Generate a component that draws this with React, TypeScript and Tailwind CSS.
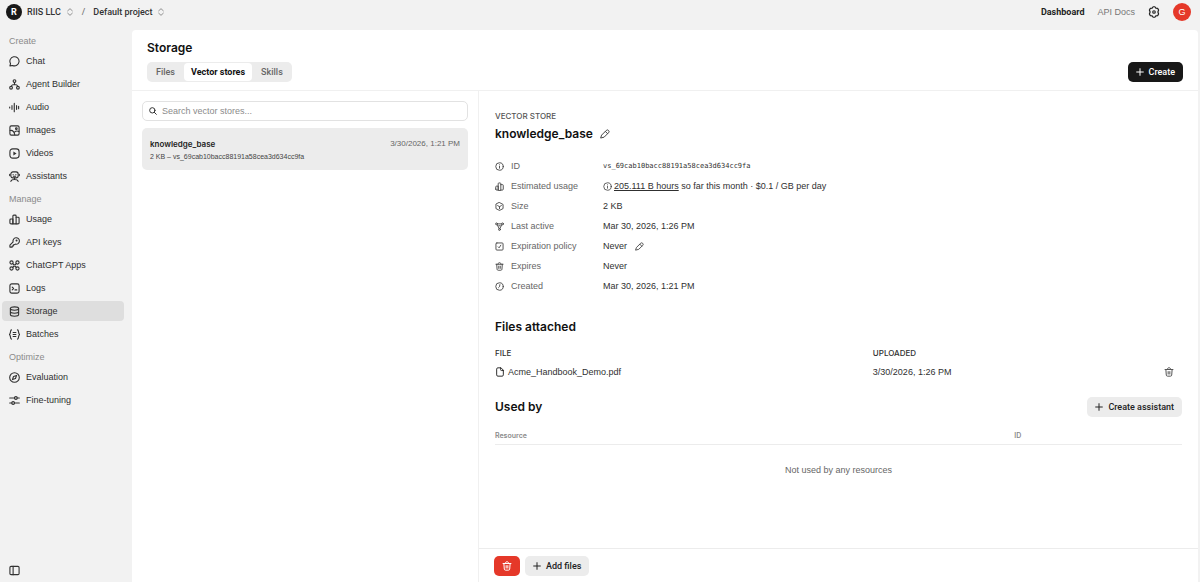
import type { ReactNode } from "react";

type IconProps = { className?: string; children: ReactNode; weight?: number };

function Icon({ className = "size-[11px]", weight = 2.4, children }: IconProps) {
  return (
    <svg
      viewBox="0 0 24 24"
      fill="none"
      stroke="currentColor"
      strokeWidth={weight}
      strokeLinecap="round"
      strokeLinejoin="round"
      aria-hidden="true"
      className={`shrink-0 ${className}`}
    >
      {children}
    </svg>
  );
}

const chat = <path d="M2 21.500l1.300-5A10 10 0 1 1 7.800 20.600z" />;
const agent = (
  <>
    <circle cx="12" cy="4.500" r="3" />
    <circle cx="4.500" cy="19" r="3" />
    <circle cx="19.500" cy="19" r="3" />
    <path d="M12 7.500v5M5 15.500c.8-2.400 3.300-3.500 7-3.500s6.200 1.100 7 3.500" />
  </>
);
const audio = <path d="M1.500 11v2M6.500 8v8M11.500 3v18M16.500 8v8M21 9.500v5" />;
const image = (
  <>
    <rect x="2" y="2" width="20" height="20" rx="3" />
    <circle cx="16" cy="8" r="1.800" />
    <path d="M2.500 12c5-1 8.500 2 10 9M12 15.500c2.500-2.500 6-3 9.500-1.500" />
  </>
);
const video = (
  <>
    <rect x="2" y="2" width="20" height="20" rx="6" />
    <path d="M9.500 7.500v9l7-4.500z" fill="currentColor" stroke="none" />
  </>
);
const robot = (
  <>
    <rect x="4" y="2" width="16" height="13" rx="4.500" />
    <path d="M1.500 7v3M22.500 7v3M9 7.500v.500M15 7.500v.500M9.500 11.500h5M4 22.500c1-3 3.500-4 8-4s7 1 8 4M12 15v3" />
  </>
);
const bars = (
  <>
    <path d="M2 19v-6a2 2 0 0 1 2-2h4.500v10.500H4.500A2.500 2.500 0 0 1 2 19z" />
    <path d="M8.500 21.500V4.500a2 2 0 0 1 2-2h3a2 2 0 0 1 2 2v17z" />
    <path d="M15.500 7H20a2 2 0 0 1 2 2v10a2.500 2.500 0 0 1-2.500 2.500h-4" />
  </>
);
const key = (
  <>
    <path d="M9 10.700A7 7 0 1 1 14 15.500L11.500 17H9.500v2.500H7V22H2v-4.500z" />
    <circle cx="16.500" cy="7.500" r="1" fill="currentColor" />
  </>
);
const apps = (
  <>
    <circle cx="5.500" cy="5.500" r="3.500" />
    <circle cx="18.500" cy="5.500" r="3.500" />
    <circle cx="5.500" cy="18.500" r="3.500" />
    <circle cx="18.500" cy="18.500" r="3.500" />
    <path d="M8.500 8l2 2.500h3l2-2.500M8.500 16l2-2.500h3l2 2.500" />
  </>
);
const terminal = (
  <>
    <rect x="2" y="2" width="20" height="20" rx="4" />
    <path d="M7 9l3 3-3 3M13 15h4" />
  </>
);
const database = (
  <>
    <ellipse cx="12" cy="5.500" rx="9" ry="3.700" />
    <path d="M3 5.500v13c0 2 4 3.700 9 3.700s9-1.700 9-3.700v-13M3 12c0 2 4 3.700 9 3.700s9-1.700 9-3.700" />
  </>
);
const batch = (
  <path d="M5.500 2C2 2 4.500 10 .8 12c3.700 2 1.200 10 4.700 10M18.500 2c3.500 0 1 8 4.700 10-3.700 2-1.200 10-4.700 10M9 7.500h6M9 12h6M9 16.500h6" />
);
const compass = (
  <>
    <circle cx="12" cy="12" r="10.500" />
    <path d="M16.500 7.500l-2.300 6.700-6.700 2.300 2.300-6.700z" />
  </>
);
const tuning = (
  <>
    <path d="M1.500 6.500H12M18 6.500h4.500M1.500 17.500H6M12 17.500h10.500" />
    <circle cx="15" cy="6.500" r="3" />
    <circle cx="9" cy="17.500" r="3" />
  </>
);
const info = (
  <>
    <circle cx="12" cy="12" r="10" />
    <path d="M12 11.500v5M12 7.500v.200" />
  </>
);
const cube = <path d="M12 1.500l9.500 5v11l-9.500 5-9.500-5v-11zM7 9.500l5 3 5-3M12 12.500V18" />;
const nodes = (
  <>
    <circle cx="4" cy="5" r="2.500" />
    <circle cx="20" cy="5" r="2.500" />
    <circle cx="12" cy="20" r="2.500" />
    <path d="M7 5h10M6 7.500l5 10M18 7.500l-5 10M10 10h4" />
  </>
);
const policy = (
  <>
    <rect x="2.500" y="2.500" width="19" height="19" rx="2.500" />
    <path d="M8.500 13l2.500 2.500 4.500-7" />
  </>
);
const trash = (
  <path d="M2.500 6h19M8 6c0-2.500 1.500-4.300 4-4.300S16 3.500 16 6M4.500 6l1 13.500A3 3 0 0 0 8.500 22h7a3 3 0 0 0 3-2.500L19.500 6M10 11v6M14 11v6" />
);
const clock = (
  <>
    <circle cx="12" cy="12" r="10" />
    <path d="M13 7l-1 5.500-2.500 2.500" />
  </>
);
const pencil = <path d="M4.500 14L15 3.500a3.800 3.800 0 0 1 5.500 5.500L10 19.500 2.500 21.500zM13 6l5 5" />;
const file = <path d="M13.500 2H7a3 3 0 0 0-3 3v14a3 3 0 0 0 3 3h10a3 3 0 0 0 3-3V8.500zM13.500 2v4.500a2 2 0 0 0 2 2H20" />;
const plus = <path d="M12 2v20M2 12h20" />;
const updown = <path d="M5 8.500L12 2l7 6.500M5 15.500l7 6.500 7-6.500" />;
const gear = (
  <>
    <path d="M10.300 1.500h3.400l2 2.900 3.600.3 1.900 3.200L19.800 12l1.400 4.100-1.900 3.200-3.600.3-2 2.900h-3.400l-2-2.900-3.600-.3-1.900-3.200L4.200 12 2.800 7.900l1.900-3.200 3.600-.3z" />
    <circle cx="12" cy="12" r="2.500" />
  </>
);

const groups = [
  {
    title: "Create",
    items: [
      { label: "Chat", icon: chat },
      { label: "Agent Builder", icon: agent },
      { label: "Audio", icon: audio },
      { label: "Images", icon: image },
      { label: "Videos", icon: video },
      { label: "Assistants", icon: robot },
    ],
  },
  {
    title: "Manage",
    items: [
      { label: "Usage", icon: bars },
      { label: "API keys", icon: key },
      { label: "ChatGPT Apps", icon: apps },
      { label: "Logs", icon: terminal },
      { label: "Storage", icon: database, active: true },
      { label: "Batches", icon: batch },
    ],
  },
  {
    title: "Optimize",
    items: [
      { label: "Evaluation", icon: compass },
      { label: "Fine-tuning", icon: tuning },
    ],
  },
];

const details: { label: string; icon: ReactNode; value: ReactNode }[] = [
  {
    label: "ID",
    icon: info,
    value: <span className="font-['DejaVu_Sans_Mono',monospace] text-[7px]">vs_69cab10bacc88191a58cea3d634cc9fa</span>,
  },
  {
    label: "Estimated usage",
    icon: bars,
    value: (
      <>
        <Icon className="mr-0.5 size-[9px]" weight={2}>
          {info}
        </Icon>
        <span>
          <span className="underline underline-offset-1">205.111 B hours</span> so far this month · $0.1 / GB per day
        </span>
      </>
    ),
  },
  { label: "Size", icon: cube, value: "2 KB" },
  { label: "Last active", icon: nodes, value: "Mar 30, 2026, 1:26 PM" },
  {
    label: "Expiration policy",
    icon: policy,
    value: (
      <>
        Never
        <button type="button" aria-label="Edit expiration policy" className="ml-2 text-[#444]">
          <Icon className="size-[9px]">{pencil}</Icon>
        </button>
      </>
    ),
  },
  { label: "Expires", icon: trash, value: "Never" },
  { label: "Created", icon: clock, value: "Mar 30, 2026, 1:21 PM" },
];

function Header() {
  return (
    <header className="flex h-6 shrink-0 items-center justify-between pr-[9px] pl-[6px]">
      <div className="flex items-center font-['Roboto',sans-serif] font-medium text-[#333]">
        <button type="button" className="flex items-center gap-[5px]">
          <span className="flex size-4 items-center justify-center rounded-full bg-[#181818] text-[9px] font-bold text-white">
            R
          </span>
          RIIS LLC
          <Icon className="size-2 text-[#777]">{updown}</Icon>
        </button>
        <span className="px-2 text-[#777]">/</span>
        <button type="button" className="flex items-center gap-1">
          Default project
          <Icon className="size-2 text-[#777]">{updown}</Icon>
        </button>
      </div>
      <nav className="flex items-center gap-[13px]">
        <a href="#dashboard" className="font-['Roboto',sans-serif] font-bold text-[#222]">
          Dashboard
        </a>
        <a href="#docs" className="text-[#777]">
          API Docs
        </a>
        <button type="button" aria-label="Settings" className="text-[#222]">
          <Icon className="size-3">{gear}</Icon>
        </button>
        <button
          type="button"
          aria-label="Account"
          className="flex size-[18px] items-center justify-center rounded-full bg-[#e53829] text-white"
        >
          G
        </button>
      </nav>
    </header>
  );
}

function Sidebar() {
  return (
    <aside className="flex w-[132px] shrink-0 flex-col justify-between pt-[7px] pr-2 pb-[6px] pl-0.5">
      <nav className="flex flex-col gap-[3px]">
        {groups.map((group) => (
          <section key={group.title}>
            <h2 className="flex h-5 items-center pl-[7px] text-[#8b8b8b]">{group.title}</h2>
            <ul className="flex flex-col gap-[3px]">
              {group.items.map((item) => (
                <li key={item.label}>
                  <a
                    href={`#${item.label}`}
                    className={`flex h-5 items-center gap-[6px] rounded px-[7px] text-[#303030] ${
                      "active" in item ? "bg-[#dedede]" : ""
                    }`}
                  >
                    <Icon>{item.icon}</Icon>
                    {item.label}
                  </a>
                </li>
              ))}
            </ul>
          </section>
        ))}
      </nav>
      <button type="button" aria-label="Toggle sidebar" className="ml-[7px] w-fit text-[#333]">
        <Icon>
          <rect x="2" y="3" width="20" height="18" rx="2.500" />
          <path d="M9 3v18" />
        </Icon>
      </button>
    </aside>
  );
}

function StoreList() {
  return (
    <section className="w-[347px] shrink-0 border-r border-[#f0f0f0] px-[10px] pt-[10px]">
      <label className="flex h-5 items-center gap-[5px] rounded-[5px] border border-[#e2e2e2] px-[6px]">
        <Icon className="size-2 text-[#333]" weight={3}>
          <circle cx="10" cy="10" r="8" />
          <path d="M16 16l6 6" />
        </Icon>
        <input
          type="search"
          aria-label="Search vector stores"
          placeholder="Search vector stores..."
          className="min-w-0 flex-1 bg-transparent outline-none placeholder:text-[#8b8b8b]"
        />
      </label>
      <button
        type="button"
        className="mt-[7px] flex h-[42px] w-full flex-col justify-end gap-px rounded-[5px] bg-[#ececec] px-2 pb-[7px] text-left"
      >
        <span className="flex w-full items-center justify-between text-[8px] leading-3">
          <span className="font-['Inter',sans-serif] font-semibold text-[#222]">knowledge_base</span>
          <span className="text-[#666]">3/30/2026, 1:21 PM</span>
        </span>
        <span className="text-[7px] leading-3 text-[#444]">2 KB – vs_69cab10bacc88191a58cea3d634cc9fa</span>
      </button>
    </section>
  );
}

function Detail() {
  return (
    <section className="flex min-w-0 flex-1 flex-col">
      <div className="min-h-0 flex-1 overflow-hidden px-4 pt-5">
        <p className="font-['Inter',sans-serif] text-[8px] leading-[10px] font-medium text-[#555] uppercase">
          Vector store
        </p>
        <div className="mt-1 flex items-center gap-[7px]">
          <h2 className="font-['Inter',sans-serif] text-[12px] leading-[18px] font-semibold text-[#111]">
            knowledge_base
          </h2>
          <button type="button" aria-label="Rename" className="text-[#444]">
            <Icon className="size-[10px]">{pencil}</Icon>
          </button>
        </div>
        <dl className="mt-[13px]">
          {details.map((row) => (
            <div key={row.label} className="flex h-5 items-center">
              <dt className="flex w-[108px] items-center gap-[7px] text-[#666]">
                <Icon className="size-[9px] text-[#444]">{row.icon}</Icon>
                {row.label}
              </dt>
              <dd className="flex items-center text-[#303030]">{row.value}</dd>
            </div>
          ))}
        </dl>

        <h3 className="mt-[22px] font-['Inter',sans-serif] text-[12px] leading-[18px] font-semibold text-[#111]">
          Files attached
        </h3>
        <table className="mt-[11px] w-full table-fixed text-left text-[#303030]">
          <thead className="font-['Inter',sans-serif] text-[8px] leading-3 uppercase">
            <tr>
              <th className="w-[55%] font-medium">File</th>
              <th className="font-medium">Uploaded</th>
              <th className="w-10" aria-label="Actions" />
            </tr>
          </thead>
          <tbody>
            <tr className="h-[26px]">
              <td>
                <span className="flex items-center gap-[3px]">
                  <Icon className="size-[10px]">{file}</Icon>
                  Acme_Handbook_Demo.pdf
                </span>
              </td>
              <td>3/30/2026, 1:26 PM</td>
              <td>
                <button type="button" aria-label="Remove file" className="mr-2 ml-auto block text-[#555]">
                  <Icon className="size-[10px]">{trash}</Icon>
                </button>
              </td>
            </tr>
          </tbody>
        </table>

        <div className="mt-3 flex items-center justify-between">
          <h3 className="font-['Inter',sans-serif] text-[12px] leading-[18px] font-semibold text-[#111]">Used by</h3>
          <button
            type="button"
            className="flex h-5 items-center gap-[5px] rounded-[5px] bg-[#ececec] px-2 font-['Roboto',sans-serif] font-medium text-[#222]"
          >
            <Icon className="size-2" weight={3}>
              {plus}
            </Icon>
            Create assistant
          </button>
        </div>
        <table className="mt-[11px] w-full table-fixed text-left">
          <thead className="border-b border-[#ececec] font-['Inter',sans-serif] text-[7px] text-[#8b8b8b]">
            <tr className="h-4">
              <th className="w-3/4 font-semibold">Resource</th>
              <th className="pl-1 font-semibold">ID</th>
            </tr>
          </thead>
          <tbody>
            <tr>
              <td colSpan={2} className="h-[52px] text-center text-[#666]">
                Not used by any resources
              </td>
            </tr>
          </tbody>
        </table>
      </div>
      <footer className="flex h-[34px] shrink-0 items-center gap-[5px] border-t border-[#ececec] px-[15px]">
        <button
          type="button"
          aria-label="Delete vector store"
          className="flex h-5 w-[26px] items-center justify-center rounded-[5px] bg-[#e53829] text-white"
        >
          <Icon className="size-[10px]">{trash}</Icon>
        </button>
        <button
          type="button"
          className="flex h-5 items-center gap-[5px] rounded-[5px] bg-[#ececec] px-2 font-['Roboto',sans-serif] font-medium text-[#222]"
        >
          <Icon className="size-2" weight={3}>
            {plus}
          </Icon>
          Add files
        </button>
      </footer>
    </section>
  );
}

export default function App() {
  return (
    <div className="flex h-screen flex-col bg-[#f2f2f2] font-['Liberation_Sans',sans-serif] text-[9px] leading-3">
      <Header />
      <div className="flex min-h-0 flex-1">
        <Sidebar />
        <main className="mt-[6px] mr-0.5 flex min-w-0 flex-1 flex-col rounded-t-[4px] bg-white">
          <div className="flex items-end justify-between border-b border-[#f0f0f0] pt-[9px] pr-[15px] pb-2 pl-[15px]">
            <div>
              <h1 className="font-['Inter',sans-serif] text-[12px] leading-[18px] font-semibold text-[#111]">Storage</h1>
              <div
                className="mt-[5px] flex h-5 items-center rounded-[5px] bg-[#ececec] font-['Roboto',sans-serif] font-medium text-[#666]"
                role="tablist"
              >
                <button type="button" role="tab" aria-selected="false" className="px-[9px]">
                  Files
                </button>
                <button
                  type="button"
                  role="tab"
                  aria-selected="true"
                  className="h-[18px] rounded bg-white px-[7px] font-bold text-[#111]"
                >
                  Vector stores
                </button>
                <button type="button" role="tab" aria-selected="false" className="px-[9px]">
                  Skills
                </button>
              </div>
            </div>
            <button
              type="button"
              className="flex h-5 items-center gap-[5px] rounded-[5px] bg-[#181818] px-2 font-['Roboto',sans-serif] font-medium text-white"
            >
              <Icon className="size-2" weight={3}>
                {plus}
              </Icon>
              Create
            </button>
          </div>
          <div className="flex min-h-0 flex-1">
            <StoreList />
            <Detail />
          </div>
        </main>
      </div>
    </div>
  );
}
